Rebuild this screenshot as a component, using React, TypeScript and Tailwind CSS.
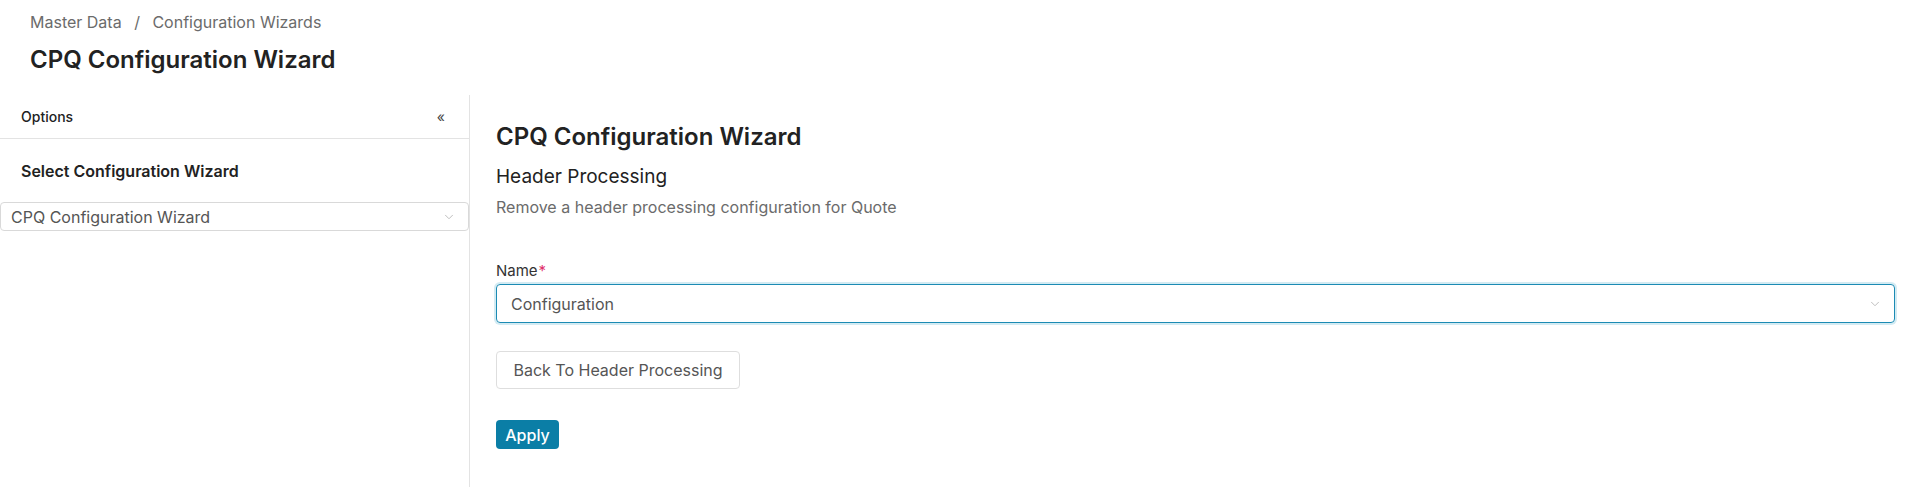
import { ChevronDown } from "lucide-react";

export default function App() {
  return (
    <div className="min-h-[487px] bg-white text-[#262626] font-['Inter','Noto_Sans',sans-serif]">
      <div className="pl-[30px] pt-[10px]">
        <div className="text-[16px] leading-[24px] text-[#6b6b6b]">
          Master Data <span className="mx-[8px]">/</span> Configuration Wizards
        </div>
        <h1 className="mt-[10px] text-[24px] leading-[32px] font-semibold text-[#222]">CPQ Configuration Wizard</h1>
      </div>

      <div className="flex mt-[19px] h-[392px]">
        <aside className="w-[470px] shrink-0 border-r border-[#e3e3e3]">
          <div className="h-[44px] flex items-center justify-between pl-[21px] pr-[24px] border-b border-[#e3e3e3]">
            <span className="text-[14px] font-medium text-[#222]">Options</span>
            <span className="text-[14px] text-[#444]">«</span>
          </div>
          <div className="pl-[21px] pt-[20px] text-[16px] leading-[24px] font-semibold text-[#222]">
            Select Configuration Wizard
          </div>
          <div className="mt-[19px] h-[29px] w-[469px] flex items-center justify-between pl-[10px] pr-[12px] border border-[#d9d9d9] rounded-[4px]">
            <span className="text-[16px] text-[#555]">CPQ Configuration Wizard</span>
            <ChevronDown className="w-[14px] h-[14px] text-[#b5b5b5]" strokeWidth={1.5} />
          </div>
        </aside>

        <main className="flex-1 pl-[26px] pr-[13px] pt-[26px]">
          <h2 className="text-[24px] leading-[32px] font-semibold text-[#222]">CPQ Configuration Wizard</h2>
          <h3 className="mt-[11px] text-[19px] leading-[26px] text-[#222]">Header Processing</h3>
          <p className="mt-[6px] text-[16px] leading-[22px] text-[#6b6b6b]">Remove a header processing configuration for Quote</p>

          <label className="block mt-[43px] text-[15px] leading-[20px] text-[#333]">
            Name<span className="text-[#e0306b] ml-[1px]">*</span>
          </label>
          <div className="mt-[3px] h-[39px] flex items-center justify-between pl-[14px] pr-[12px] border border-[#1b8bb4] rounded-[4px] ring-[2px] ring-[#d3ebf3]">
            <span className="text-[16px] text-[#555]">Configuration</span>
            <ChevronDown className="w-[14px] h-[14px] text-[#b5b5b5]" strokeWidth={1.5} />
          </div>

          <button className="mt-[28px] h-[38px] w-[244px] border border-[#dedede] rounded-[4px] text-[16px] text-[#555] bg-white">
            Back To Header Processing
          </button>
          <div>
            <button className="mt-[31px] h-[29px] w-[63px] rounded-[4px] bg-[#0b7ea6] text-white text-[16px] font-medium">
              Apply
            </button>
          </div>
        </main>
      </div>
    </div>
  );
}
